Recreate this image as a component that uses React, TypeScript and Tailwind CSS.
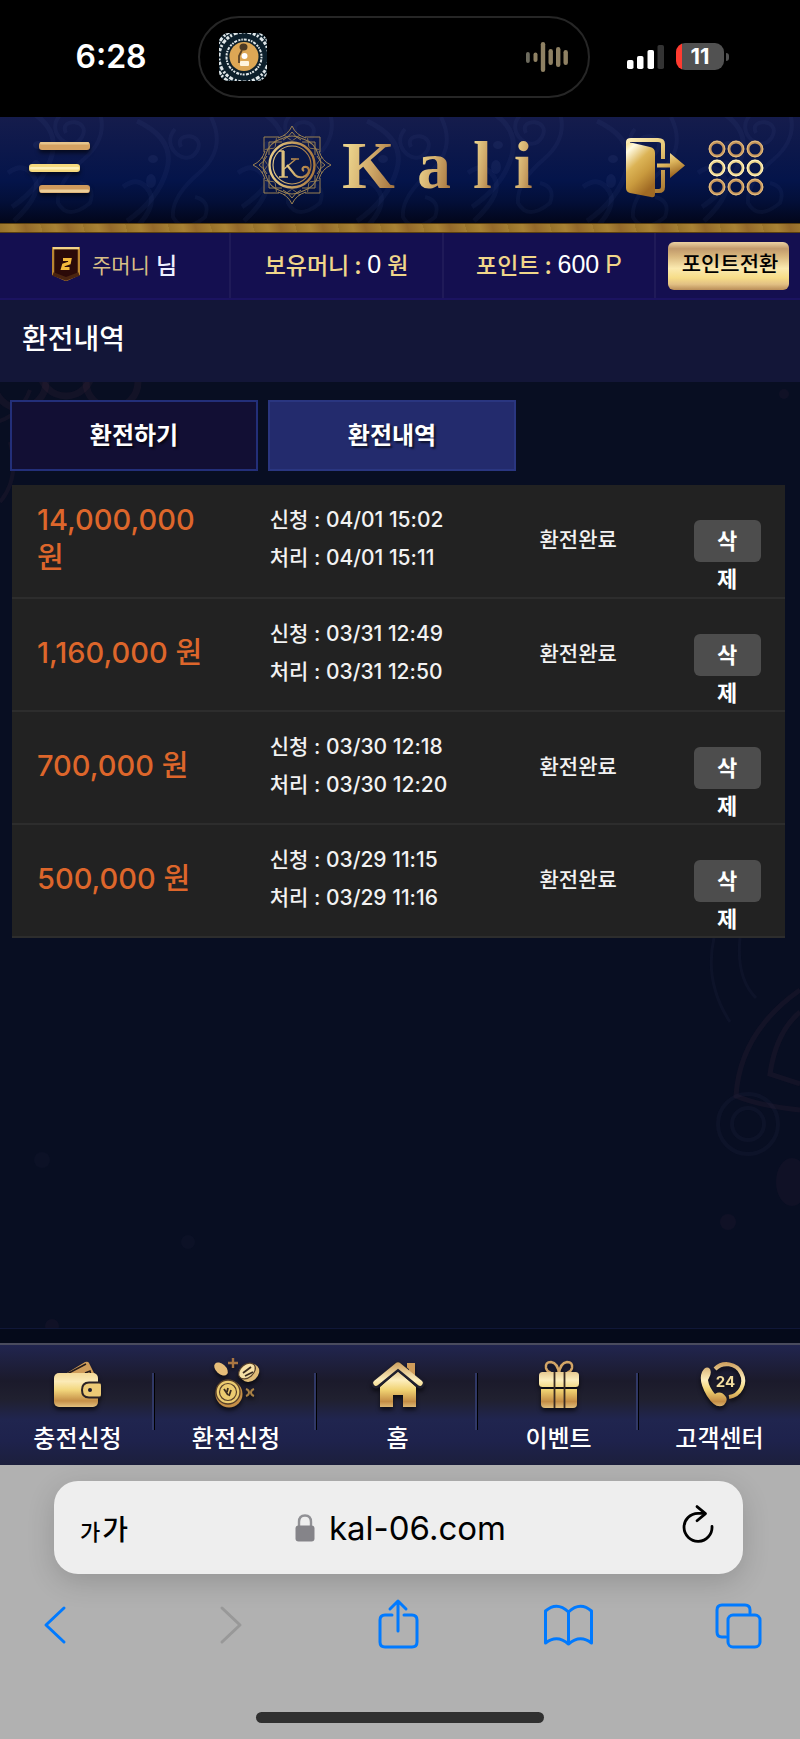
import type { ReactNode } from 'react';

const KR = "font-['Noto_Sans_CJK_KR',sans-serif]";
const INTER = "font-['Inter','Noto_Sans_CJK_KR',sans-serif]";

type Withdrawal = { amount: string; requested: string; processed: string };

const records: Withdrawal[] = [
  { amount: '14,000,000', requested: '04/01 15:02', processed: '04/01 15:11' },
  { amount: '1,160,000', requested: '03/31 12:49', processed: '03/31 12:50' },
  { amount: '700,000', requested: '03/30 12:18', processed: '03/30 12:20' },
  { amount: '500,000', requested: '03/29 11:15', processed: '03/29 11:16' },
];

function Gradients() {
  return (
    <svg width="0" height="0" className="absolute" aria-hidden="true">
      <defs>
        <linearGradient id="gold" x1="0" y1="0" x2="0" y2="1">
          <stop offset="0" stopColor="#f3d998" />
          <stop offset="0.25" stopColor="#fbeab6" />
          <stop offset="0.5" stopColor="#f2d67c" />
          <stop offset="0.82" stopColor="#c58f47" />
          <stop offset="1" stopColor="#e3c07e" />
        </linearGradient>
        <linearGradient id="goldPage" gradientUnits="userSpaceOnUse" x1="0" y1="0" x2="0" y2="50">
          <stop offset="0" stopColor="#c4904c" />
          <stop offset="0.42" stopColor="#fdeebd" />
          <stop offset="0.62" stopColor="#f0d272" />
          <stop offset="0.85" stopColor="#c48d45" />
          <stop offset="1" stopColor="#e6c684" />
        </linearGradient>
        <linearGradient id="goldDiag" gradientUnits="userSpaceOnUse" x1="0" y1="0" x2="40" y2="60">
          <stop offset="0" stopColor="#fff3c4" />
          <stop offset="0.4" stopColor="#e8c876" />
          <stop offset="1" stopColor="#a06c26" />
        </linearGradient>
        <linearGradient id="goldArrow" x1="0" y1="0" x2="0.4" y2="1">
          <stop offset="0" stopColor="#fbe9ae" />
          <stop offset="0.5" stopColor="#dcb45c" />
          <stop offset="1" stopColor="#9a6420" />
        </linearGradient>
        <linearGradient id="goldLine" x1="0" y1="0" x2="1" y2="0">
          <stop offset="0" stopColor="#e6cb86" />
          <stop offset="1" stopColor="#a9783f" />
        </linearGradient>
        <linearGradient id="door" x1="0" y1="0" x2="0.5" y2="1">
          <stop offset="0" stopColor="#f7de8b" />
          <stop offset="0.15" stopColor="#fffbe2" />
          <stop offset="0.45" stopColor="#dcb456" />
          <stop offset="0.7" stopColor="#c99a3e" />
          <stop offset="1" stopColor="#a06a24" />
        </linearGradient>
      </defs>
    </svg>
  );
}

function StatusBar() {
  return (
    <div className="grid h-[117px] grid-cols-[198fr_392fr_210fr] bg-black">
      <div className={`flex items-center justify-center pl-6 pb-1 text-[32px] font-semibold text-white ${INTER}`}>6:28</div>
      <div className="mt-4 flex h-[82px] items-center justify-between rounded-full border-2 border-[#262626] pl-[19px] pr-5">
        <svg width="48" height="48" viewBox="0 0 48 48">
          <clipPath id="appIcon">
            <rect width="48" height="48" rx="9" />
          </clipPath>
          <g clipPath="url(#appIcon)">
            <rect width="48" height="48" fill="#0c1f2b" />
            <g fill="none" stroke="#dfe6e8">
              <circle cx="25" cy="24" r="25" strokeWidth="3" strokeDasharray="3 1.5 2 2 4 1.5" />
              <circle cx="25" cy="24" r="29" strokeWidth="3" strokeDasharray="4 2 2 1" />
              <circle cx="25" cy="24" r="17.5" strokeWidth="2" strokeDasharray="1.5 1 3 1.4 2 1" />
            </g>
            <circle cx="25" cy="23.5" r="14.5" fill="#dda755" />
            <ellipse cx="24.500" cy="14" rx="4" ry="3.500" fill="#4d3a24" />
            <path d="M23 17l-3 6v7" stroke="#5d4528" strokeWidth="1.800" fill="none" />
            <circle cx="25.500" cy="23" r="3" fill="#fff" />
            <rect x="21" y="28" width="9" height="5" rx="1" fill="#fff4dd" />
          </g>
        </svg>
        <svg width="42" height="30" viewBox="0 0 42 30" fill="#8f8163">
          <rect x="0" y="10" width="3.800" height="11" rx="1.900" fill="#6d6b5e" />
          <rect x="7.500" y="10.500" width="4" height="9.500" rx="2" />
          <rect x="14.800" y="0" width="4.400" height="30" rx="2.200" />
          <rect x="22.500" y="7" width="4.400" height="16" rx="2.200" />
          <rect x="30" y="5" width="4.400" height="20" rx="2.200" />
          <rect x="37.500" y="8" width="4.400" height="15" rx="2.200" />
        </svg>
      </div>
      <div className="flex items-center gap-3 pb-1 pl-[37px]">
        <svg width="37" height="24" viewBox="0 0 37 24" fill="#fff">
          <rect x="0" y="15" width="6.500" height="9" rx="1.800" />
          <rect x="10" y="11" width="6.500" height="13" rx="1.800" />
          <rect x="20.500" y="5" width="6.500" height="19" rx="1.800" />
          <rect x="30.500" y="0" width="6.500" height="24" rx="1.800" fill="#333" />
        </svg>
        <div className="flex items-center gap-0.5">
          <div className={`flex h-[27px] w-[48px] items-center justify-center overflow-hidden rounded-[9px] bg-[linear-gradient(90deg,#ff3b30_6px,#515151_6px)] text-[22px] font-bold text-white ${INTER}`}>11</div>
          <div className="h-2 w-[3px] rounded-r bg-[#515151]" />
        </div>
      </div>
    </div>
  );
}

function Emblem() {
  const petals = [0, 45, 90, 135, 180, 225, 270, 315];
  return (
    <svg width="78" height="80" viewBox="-39 -40 78 80" fill="none">
      <g stroke="#9a8153" strokeWidth="1">
        <path d="M-28 -13V-28H-13M13 -28H28V-13M28 13V28H13M-13 28H-28V13" />
        <path d="M-23 -10V-23H-10M10 -23H23V-10M23 10V23H10M-10 23H-23V10" />
        {petals.map((a, i) => (
          <g key={a} transform={`rotate(${a})`}>
            {i % 2 === 0 && <path d="M-14 -27Q-4 -30 0 -39Q4 -30 14 -27M-9 -25Q-3 -28 0 -33Q3 -28 9 -25" />}
            <path d="M-11 -26Q0 -32 11 -26" />
            <path d="M0 -24L8 -30M0 -24L-8 -30" strokeWidth="0.800" />
          </g>
        ))}
      </g>
      <circle r="24.500" fill="#0a1848" />
      <g stroke="url(#goldLine)">
        <circle r="22.500" strokeWidth="2.400" />
        <circle r="19" strokeWidth="1.100" />
        <path d="M-13 -14H-8M-13 12H-4M-1 -6H7" strokeWidth="1.300" />
        <path d="M4 -6L-8 4" strokeWidth="1.300" />
        <path d="M-5 0L3 10Q6 13 11 12Q17 10 17 5Q16 1 12 2Q9 4 12 6" strokeWidth="2.200" />
      </g>
      <rect x="-10.500" y="-14" width="3.200" height="26" fill="#dcc07c" />
    </svg>
  );
}

function HeaderOrnament() {
  const cells = [0, 115, 230, 345, 460, 575, 690];
  return (
    <svg className="absolute inset-0 h-full w-full" viewBox="0 0 800 106" preserveAspectRatio="xMidYMid slice" fill="none" stroke="#7d8fd0" strokeOpacity="0.06" strokeWidth="5" aria-hidden="true">
      {cells.map((x, i) => (
        <g key={x} transform={`translate(${x} ${i % 2 ? 8 : -6})`}>
          <path d="M22 -4Q60 14 52 44T12 96" />
          <path d="M60 4C44 22 72 44 82 26S58 6 66 22" strokeWidth="4" />
          <path d="M96 -8Q112 24 84 48T58 92Q68 110 90 92Q96 76 80 72" strokeWidth="4" />
          <path d="M8 62Q24 50 34 66T14 110" />
          <ellipse cx="38" cy="34" rx="5" ry="4" fill="#7d8fd0" fillOpacity="0.08" stroke="none" />
          <ellipse cx="36" cy="56" rx="5" ry="7" fill="#7d8fd0" fillOpacity="0.08" stroke="none" />
        </g>
      ))}
    </svg>
  );
}

function Header() {
  const dots = [0, 1, 2];
  return (
    <header>
      <div className="relative bg-[linear-gradient(180deg,#151c4c_0%,#04144a_60%,#030f38_80%,#02061a_100%)]">
        <HeaderOrnament />
        <div className="relative grid h-[106px] grid-cols-[253fr_372fr_175fr] items-center pb-1">
          <button type="button" aria-label="메뉴" className="ml-7 w-[64px]">
            <svg width="64" height="56" viewBox="0 0 64 56" className="drop-shadow-[0_3px_2px_rgba(0,0,0,0.6)]">
              <rect x="11" y="2" width="51" height="8" rx="3" fill="#d5a262" />
              <rect x="12" y="2" width="49" height="2.500" rx="1" fill="#e6c48c" />
              <rect x="1" y="24" width="51" height="8" rx="3" fill="#f5d97e" />
              <rect x="2" y="27" width="49" height="2.500" rx="1" fill="#fdf0b8" />
              <rect x="11" y="45" width="51" height="8" rx="3" fill="#cf9a5c" />
              <rect x="12" y="49.500" width="49" height="3" rx="1" fill="#ecce98" />
            </svg>
          </button>
          <a href="#home" aria-label="Kali" className="flex items-center pb-1.5">
            <Emblem />
            <span className="ml-[11px] flex items-center gap-[22px] font-['Liberation_Serif',serif] text-[68px] leading-[76px] font-bold">
              {['K', 'a', 'l', 'i'].map((c) => (
                <span key={c} className="bg-[linear-gradient(100deg,#ecd48c_15%,#cfa868_55%,#a87842_90%)] bg-clip-text text-transparent">
                  {c}
                </span>
              ))}
            </span>
          </a>
          <div className="flex items-center gap-[20px]">
            <button type="button" aria-label="로그아웃">
              <svg width="62" height="62" viewBox="0 0 62 62">
                <path d="M3 8V5Q3 3 6 3H33Q38 3 38 7V22M38 33V50Q38 54 34 54H28" fill="none" stroke="url(#goldDiag)" strokeWidth="4" />
                <path d="M32 26.500H45V16L60 28.500L45 41V30.500H32Z" fill="url(#goldArrow)" />
                <path d="M1 8Q2 5 8 6L25 10Q30 11 30 16V57Q30 61 26 60L5 56Q1 55 1 51Z" fill="url(#door)" />
              </svg>
            </button>
            <button type="button" aria-label="전체 메뉴">
              <svg width="58" height="58" viewBox="0 0 58 58" fill="none">
                {dots.map((r) =>
                  dots.map((c) => (
                    <g key={`${r}-${c}`}>
                      <circle cx={10 + c * 19} cy={10 + r * 19} r="7" strokeWidth="2.800" stroke={r === 1 ? '#f0d88e' : '#c9985c'} />
                      <circle cx={10 + c * 19} cy={10 + r * 19} r="7.800" stroke={r === 1 ? '#fff3c8' : '#e2bd84'} strokeWidth="1" />
                    </g>
                  )),
                )}
              </svg>
            </button>
          </div>
        </div>
      </div>
      <div className="h-[10px] border-y border-[#5a4010] bg-[repeating-linear-gradient(75deg,#98722a_0px,#a88234_14px,#94692a_26px,#a37e32_41px)]" />
    </header>
  );
}

function InfoBar() {
  return (
    <section className={`grid h-[67px] grid-cols-[231fr_213fr_212fr_144fr] border-b-2 border-[#1b1360] bg-[#140f50] text-[23px] leading-8 font-medium text-[#f0d68a] ${KR}`}>
      <div className="flex items-center justify-center border-r-2 border-[#1f1a58] pb-1">
        <svg width="28" height="34" viewBox="0 0 28 34">
          <path d="M1 1H27V27L14 33L1 27Z" fill="#2b0a08" stroke="#b98532" strokeWidth="2.500" />
          <path d="M1 1H27" stroke="#f2d489" strokeWidth="2.500" />
          <path d="M1 27L14 32L27 27" fill="none" stroke="#4a2410" strokeWidth="3.500" />
          <path d="M11 12.500H18L17.300 16L11.500 18L10.500 21.500H17.500" fill="none" stroke="#f3b93c" strokeWidth="3" />
        </svg>
        <span className="ml-3 text-[21px] font-normal text-[#d8bf86]">주머니</span>
        <span className="ml-1.5 text-[#eef0ff]">님</span>
      </div>
      <div className="flex items-center justify-center gap-1.5 border-r-2 border-[#1f1a58] pb-1">
        <span>보유머니 :</span>
        <span className="font-['Liberation_Sans',sans-serif] text-[25px] text-white">0</span>
        <span>원</span>
      </div>
      <div className="flex items-center justify-center gap-1.5 border-r-2 border-[#1f1a58] pb-1">
        <span>포인트 :</span>
        <span className="font-['Liberation_Sans',sans-serif] text-[25px] text-white">600</span>
        <span className="font-['Liberation_Sans',sans-serif] text-[25px]">P</span>
      </div>
      <div className="flex items-center justify-center">
        <button type="button" className="h-12 w-[121px] rounded-md bg-[linear-gradient(180deg,#ecd3a4_0%,#c19a6c_14%,#d9b87e_30%,#fbeab0_55%,#f6dc87_75%,#e2c084_88%,#b98d58_100%)] pb-2 pl-1 text-[21px] font-medium text-black">
          포인트전환
        </button>
      </div>
    </section>
  );
}

function PageOrnament() {
  return (
    <svg className="absolute inset-0 h-full w-full" viewBox="0 0 800 961" preserveAspectRatio="xMidYMin slice" fill="none" stroke="#5b2f4a" strokeOpacity="0.14" strokeWidth="7" aria-hidden="true">
      <circle cx="20" cy="0" r="26" />
      <circle cx="66" cy="-12" r="26" />
      <circle cx="112" cy="0" r="26" />
      <path d="M-4 40Q20 34 30 8M0 120Q20 96 10 60" strokeWidth="4" />
      <path d="M714 556Q704 600 730 640M740 556Q736 596 756 616" strokeWidth="3" stroke="#2f2f52" />
      <path d="M800 608Q740 650 736 714Q760 724 800 728M800 630Q776 650 770 692L800 702" strokeWidth="5" />
      <g strokeWidth="4" stroke="#2f2f52">
        <circle cx="748" cy="742" r="30" />
        <circle cx="748" cy="742" r="16" />
      </g>
      <g fill="#5b2f4a" fillOpacity="0.1" stroke="none">
        <ellipse cx="792" cy="800" rx="16" ry="24" />
        <circle cx="728" cy="840" r="8" />
        <circle cx="52" cy="944" r="7" />
        <circle cx="784" cy="12" r="5" />
        <circle cx="42" cy="778" r="8" fill="#2f2f52" />
        <circle cx="188" cy="860" r="7" fill="#2f2f52" />
      </g>
    </svg>
  );
}

function Tab({ active, children }: { active?: boolean; children: ReactNode }) {
  const tone = active ? 'bg-[#232b6d] border-[#2a3680]' : 'bg-[#120f34] border-[#232f79]';
  return (
    <button type="button" className={`h-[71px] w-[32%] border-2 pb-1 text-2xl font-bold text-white [text-shadow:2px_2px_2px_rgba(0,0,0,0.6)] ${tone}`}>
      {children}
    </button>
  );
}

function History() {
  return (
    <table className="w-full table-fixed border-collapse bg-[#222] text-[21px] font-medium text-[#f2f2f2]">
      <colgroup>
        <col className="w-[27%]" />
        <col className="w-[35%]" />
        <col className="w-[23%]" />
        <col className="w-[15%]" />
      </colgroup>
      <tbody>
        {records.map((r) => (
          <tr key={r.requested} className="h-[113px] border-b-2 border-[#2d2d2d]">
            <td className={`pb-1 pl-[25px] text-[29px] leading-[38px] text-[#dd662b] ${INTER}`}>{r.amount} 원</td>
            <td className={`pb-1 pl-[49px] leading-[38px] ${INTER}`}>
              <div>신청 : {r.requested}</div>
              <div>처리 : {r.processed}</div>
            </td>
            <td className="pr-1 pb-1 text-center">환전완료</td>
            <td>
              <button type="button" className="mx-auto block h-[42px] w-[67px] rounded-md bg-[#4d4d4d] px-5 text-[22px] font-bold text-white">
                <span className="block h-[42px] leading-[38px]">삭제</span>
              </button>
            </td>
          </tr>
        ))}
      </tbody>
    </table>
  );
}

function NavIcon({ children }: { children: ReactNode }) {
  return (
    <svg width="50" height="52" viewBox="0 0 50 52" className="overflow-visible drop-shadow-[0_3px_2px_rgba(0,0,0,0.6)]">
      {children}
    </svg>
  );
}

const navItems: { label: string; icon: ReactNode }[] = [
  {
    label: '충전신청',
    icon: (
      <>
        <path d="M9 17L32 3Q35 2 36 4L42 16Z" fill="#cf9c5a" />
        <path d="M14 15L33 5M32 14L37 12L38 16" stroke="#251b1a" strokeWidth="1.500" fill="none" />
        <rect x="1" y="14" width="44" height="34" rx="5" fill="url(#gold)" />
        <path d="M46 24H36Q29 24 29 31T36 38H46Q48 38 48 35V27Q48 24 46 24Z" fill="#ecca76" />
        <path d="M47 23.500H36Q29 23.500 29 31T36 38.500H47" fill="none" stroke="#2a2226" strokeWidth="2" />
        <circle cx="37" cy="31" r="2" fill="#1d1b2c" />
      </>
    ),
  },
  {
    label: '환전신청',
    icon: (
      <>
        <ellipse cx="10" cy="10" rx="8" ry="5" transform="rotate(42 10 10)" fill="#e6bd79" />
        <path d="M22 -1V9M17 4H27" stroke="#a87542" strokeWidth="2.400" />
        <ellipse cx="39" cy="14" rx="10" ry="8" transform="rotate(-40 39 14)" fill="#dfbb77" />
        <ellipse cx="36" cy="12" rx="9.500" ry="6.500" transform="rotate(-40 36 12)" fill="#f6e0a6" stroke="#56402a" strokeWidth="1.200" />
        <path d="M32 14L40 8M34 17L42 13" stroke="#3a2b20" strokeWidth="1.800" />
        <circle cx="18" cy="35" r="13.500" fill="#c58f47" />
        <circle cx="17" cy="33" r="12" fill="#eccb70" stroke="#59412a" strokeWidth="1.300" />
        <circle cx="17" cy="33" r="8.500" fill="none" stroke="#59412a" strokeWidth="1.200" />
        <path d="M13 30L17 36M17 29L16 33M20 31L18 37" stroke="#3a2b20" strokeWidth="1.800" />
        <path d="M35 30Q38 31 38 33.500T35 37M43 30Q40 31 40 33.500T43 37" stroke="#a98145" strokeWidth="2" fill="none" />
      </>
    ),
  },
  {
    label: '홈',
    icon: (
      <>
        <path d="M34 12V4H42V20L34 13Z" fill="#cf9c5a" />
        <path d="M7 28L25 12L43 28V48H30V36H20V48H7Z" fill="url(#goldPage)" />
        <path d="M3 25L25 7L47 25" fill="none" stroke="#20202e" strokeWidth="9" strokeLinecap="round" strokeLinejoin="round" />
        <path d="M36 12V4H42V18Z" fill="#cf9c5a" />
        <path d="M3 24L25 6L47 24" fill="none" stroke="url(#goldPage)" strokeWidth="5.500" strokeLinecap="round" strokeLinejoin="round" />
      </>
    ),
  },
  {
    label: '이벤트',
    icon: (
      <>
        <path d="M25 15Q24 4 17 3Q11 3 12 9Q13 13 17 14M25 15Q26 4 33 3Q39 3 38 9Q37 13 33 14" fill="none" stroke="#d3a566" strokeWidth="2.500" />
        <rect x="5" y="13" width="40" height="15" rx="3.500" fill="url(#goldPage)" />
        <path d="M7 30H43V45Q43 49 39 49H11Q7 49 7 45Z" fill="url(#goldPage)" />
        <path d="M20.500 13V49M30.500 13V49" stroke="#3b2c22" strokeWidth="1.800" />
      </>
    ),
  },
  {
    label: '고객센터',
    icon: (
      <>
        <path d="M20 10A16.500 16.500 0 1 1 34 38" fill="none" stroke="url(#goldPage)" strokeWidth="4" />
        <path d="M7 13Q11 6 15 10Q17 14 14 19L13 21Q14 28 20 35Q26 31 31 38Q33 42 29 46Q21 51 12 37Q3 22 7 13Z" fill="url(#goldPage)" />
        <text x="30.500" y="27.500" textAnchor="middle" fontFamily="Inter, sans-serif" fontSize="15" fontWeight="700" fill="#f3dda0">24</text>
      </>
    ),
  },
];

function BottomNav() {
  return (
    <nav className="grid h-[122px] grid-cols-[155fr_162fr_161fr_161fr_161fr] border-t-2 border-[#4a4c5e] bg-[linear-gradient(180deg,#21254f_0%,#1b1a2b_30%,#20202f_45%,#20254f_62%,#1e224c_80%,#1c1f3c_100%)]">
      {navItems.map((item, i) => (
        <a key={item.label} href={`#${item.label}`} className="relative flex flex-col items-center pt-3.5 text-2xl font-medium text-white">
          <NavIcon>{item.icon}</NavIcon>
          <span className="mt-2 leading-9">{item.label}</span>
          {i < navItems.length - 1 && <span className="absolute top-7 right-0 h-[57px] w-[3px] border-r border-black bg-[#303866]" />}
        </a>
      ))}
    </nav>
  );
}

function ToolIcon({ label, disabled, children }: { label: string; disabled?: boolean; children: ReactNode }) {
  return (
    <button type="button" aria-label={label} disabled={disabled}>
      <svg width="48" height="52" viewBox="0 0 48 52" className="overflow-visible" fill="none" stroke={disabled ? '#989898' : '#007aff'} strokeWidth="3" strokeLinecap="round" strokeLinejoin="round">
        {children}
      </svg>
    </button>
  );
}

function BrowserBar() {
  return (
    <footer className={`bg-[#b1b1b1] pt-4 pb-4 ${INTER}`}>
      <div className="ml-[54px] mr-[57px] grid h-[93px] grid-cols-[1fr_auto_1fr] items-center rounded-[24px] bg-[#eee] text-black shadow-[0_8px_28px_rgba(0,0,0,0.16)]">
        <button type="button" className={`flex items-baseline gap-0.5 pl-[26px] font-medium ${KR}`}>
          <span className="text-[22px]">가</span>
          <span className="text-[28px]">가</span>
        </button>
        <div className="flex items-center gap-3.5 pl-1">
          <svg width="20" height="28" viewBox="0 0 20 28">
            <path d="M4 13V8Q4 1.500 10 1.500T16 8V13" fill="none" stroke="#919195" strokeWidth="2.400" />
            <rect x="0.500" y="11.500" width="19" height="16" rx="3" fill="#858489" />
          </svg>
          <span className="text-[33px] leading-10">kal-06.com</span>
        </div>
        <button type="button" aria-label="새로고침" className="justify-self-end pr-[28px] pb-2">
          <svg width="34" height="40" viewBox="0 0 34 40" fill="none" stroke="#000" strokeWidth="2.800" strokeLinecap="round" strokeLinejoin="round">
            <path d="M22 9.300H17A14 14 0 1 0 31 22.500" />
            <path d="M16 2.600L24.500 9.600L16 16.700" />
          </svg>
        </button>
      </div>
      <div className="mt-[23px] flex justify-between pr-[37px] pl-8">
        <ToolIcon label="뒤로">
          <path d="M32 11L14 28L32 45" />
        </ToolIcon>
        <ToolIcon label="앞으로" disabled>
          <path d="M19 11L37 28L19 45" />
        </ToolIcon>
        <ToolIcon label="공유">
          <path d="M18 18H11Q6 18 6 23V45Q6 50 11 50H38Q43 50 43 45V23Q43 18 38 18H30" />
          <path d="M24 34V4M16 12L24 4L32 12" />
        </ToolIcon>
        <ToolIcon label="책갈피">
          <path d="M24.500 15Q13 4 1.500 14V46Q13 37 24.500 47Q36 37 47.500 46V14Q36 4 24.500 15V47" />
        </ToolIcon>
        <ToolIcon label="탭">
          <rect x="13" y="18" width="32" height="32" rx="5" />
          <path d="M11 40H7Q2 40 2 35V13Q2 8 7 8H30Q35 8 35 13V16" />
        </ToolIcon>
      </div>
      <div className="mx-auto mt-[63px] h-[11px] w-[36%] rounded-full bg-[#303030]" />
    </footer>
  );
}

export default function App() {
  return (
    <div className={`flex min-h-screen flex-col bg-[#080e22] ${KR}`}>
      <Gradients />
      <StatusBar />
      <Header />
      <InfoBar />
      <h1 className="bg-[#131638] px-[22px] pt-4 pb-[24px] text-[28px] leading-[42px] font-medium text-white">환전내역</h1>
      <main className="relative flex-1 bg-[#080e22]">
        <PageOrnament />
        <div className="relative pt-[18px] pr-[15px] pb-6 pl-3">
          <div className="-ml-0.5 flex gap-2.5">
            <Tab>환전하기</Tab>
            <Tab active>환전내역</Tab>
          </div>
          <div className="mt-3.5">
            <History />
          </div>
        </div>
        <div className="absolute inset-x-0 bottom-0 h-[15px] border-t border-[#101738] bg-[#050a1a]" />
      </main>
      <BottomNav />
      <BrowserBar />
    </div>
  );
}
